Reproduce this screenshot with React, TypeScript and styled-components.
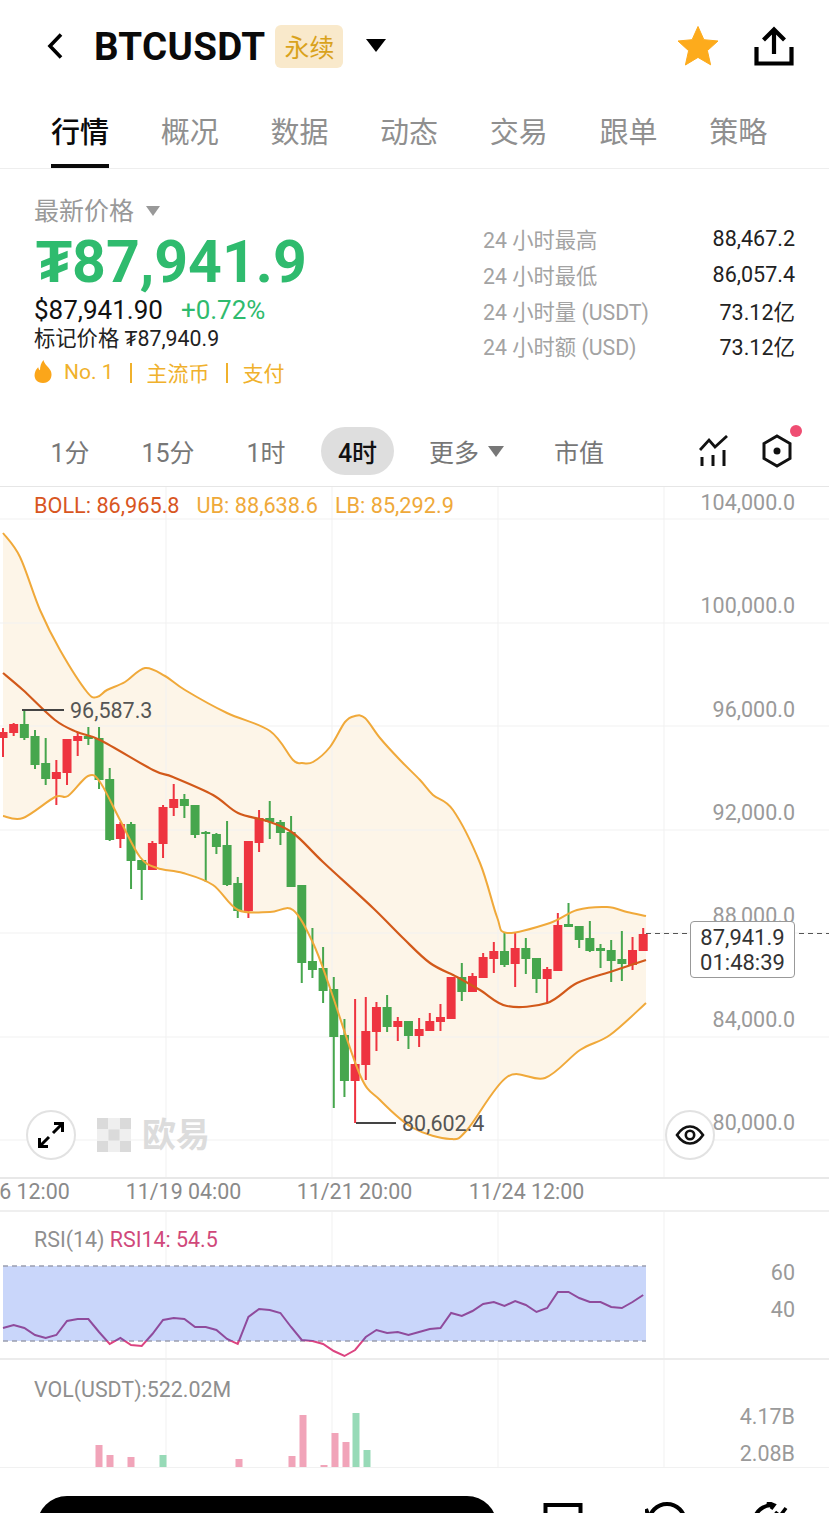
import styled, { createGlobalStyle } from "styled-components";

const FONT = `Roboto, "Noto Sans CJK SC", sans-serif`;
const STEP = 10.67;
const candleX = (i: number) => 3 + i * STEP;

// top of body, bottom of body, top of wick, bottom of wick, colour
type Candle = [number, number, number, number, "r" | "g"];
const CANDLES: Candle[] = [
  [732, 738, 728, 757, "r"], [724, 733, 723, 736, "r"], [724, 738, 711, 740, "g"], [736, 765, 730, 769, "g"],
  [763, 779, 738, 785, "g"], [772, 779, 760, 805, "r"], [739, 773, 739, 785, "r"], [736, 741, 732, 756, "r"],
  [736, 739, 727, 745, "g"], [738, 780, 727, 789, "g"], [779, 840, 768, 841, "g"], [824, 839, 822, 848, "r"],
  [824, 861, 822, 889, "g"], [860, 870, 860, 900, "g"], [843, 870, 841, 870, "r"], [807, 844, 805, 858, "r"],
  [799, 808, 784, 816, "r"], [799, 806, 794, 818, "g"], [805, 835, 805, 838, "g"], [832, 834, 831, 882, "g"],
  [834, 847, 833, 854, "g"], [845, 885, 821, 886, "g"], [883, 911, 877, 918, "g"], [841, 911, 841, 918, "r"],
  [818, 843, 810, 852, "r"], [818, 822, 801, 839, "g"], [822, 833, 820, 845, "g"], [832, 887, 816, 887, "g"],
  [885, 963, 885, 983, "g"], [961, 970, 928, 978, "g"], [968, 991, 947, 1003, "g"], [989, 1037, 977, 1108, "g"],
  [1035, 1081, 1019, 1097, "g"], [1064, 1081, 999, 1123, "r"], [1031, 1065, 997, 1080, "r"], [1007, 1032, 1002, 1051, "r"],
  [1007, 1027, 995, 1032, "g"], [1021, 1027, 1017, 1041, "r"], [1021, 1036, 1021, 1049, "g"], [1029, 1036, 1018, 1047, "r"],
  [1021, 1031, 1013, 1031, "r"], [1017, 1022, 1004, 1031, "r"], [977, 1019, 977, 1019, "r"], [977, 992, 963, 1001, "g"],
  [976, 992, 973, 992, "r"], [957, 978, 953, 978, "r"], [951, 959, 942, 973, "r"], [951, 965, 932, 967, "g"],
  [948, 964, 932, 987, "r"], [948, 959, 938, 974, "g"], [958, 979, 958, 993, "g"], [969, 979, 967, 1004, "r"],
  [925, 971, 913, 971, "r"], [924, 927, 903, 927, "g"], [926, 940, 926, 948, "g"], [938, 951, 921, 952, "g"],
  [948, 951, 944, 968, "g"], [950, 961, 940, 982, "g"], [959, 964, 931, 981, "g"], [950, 965, 937, 970, "r"],
  [934, 951, 928, 951, "r"],
];

const UPPER = [
  [3, 533], [20, 557], [40, 610], [60, 650], [87, 692], [97, 697], [107, 690], [125, 682], [145, 668], [165, 676],
  [185, 690], [227, 713], [270, 731], [293, 760], [302, 763], [313, 762], [330, 747], [345, 722], [355, 716], [365, 718],
  [380, 738], [400, 760], [420, 780], [433, 795], [453, 810], [480, 863], [497, 917], [507, 933], [550, 923], [577, 910],
  [607, 907], [627, 912], [646, 916],
];
const MIDDLE = [
  [3, 673], [23, 690], [55, 720], [77, 732], [100, 740], [153, 770], [173, 777], [213, 795], [238, 813], [267, 821],
  [293, 833], [323, 862], [373, 908], [403, 938], [430, 963], [457, 977], [480, 990], [507, 1006], [547, 1003],
  [577, 983], [613, 971], [646, 960],
];
const LOWER = [
  [3, 816], [23, 818], [55, 797], [68, 796], [88, 776], [100, 782], [120, 820], [140, 857], [157, 868], [183, 873],
  [213, 885], [238, 910], [270, 912], [293, 910], [313, 943], [330, 988], [360, 1075], [380, 1100], [413, 1128],
  [450, 1139], [467, 1130], [507, 1077], [545, 1078], [580, 1050], [610, 1035], [646, 1003],
];

const RSI = [
  1328, 1325, 1328, 1335, 1338, 1335, 1321, 1319, 1319, 1332, 1344, 1338, 1345, 1346, 1334, 1320, 1318, 1319, 1327, 1327,
  1330, 1339, 1344, 1317, 1309, 1310, 1313, 1327, 1340, 1341, 1344, 1351, 1356, 1350, 1337, 1330, 1333, 1332, 1335, 1332,
  1329, 1328, 1313, 1316, 1311, 1304, 1302, 1306, 1301, 1305, 1312, 1308, 1292, 1292, 1298, 1302, 1302, 1307, 1308, 1302,
  1295,
];

const VOLUME: [number, number, "r" | "g"][] = [
  [99, 1445, "r"], [110, 1455, "r"], [131, 1457, "r"], [163, 1455, "g"], [239, 1459, "r"], [292, 1456, "r"],
  [303, 1415, "r"], [324, 1465, "r"], [335, 1433, "r"], [346, 1442, "r"], [356, 1413, "g"], [367, 1450, "g"],
];

const TABS = ["行情", "概况", "数据", "动态", "交易", "跟单", "策略"];
const STATS = [
  ["24 小时最高", "88,467.2"],
  ["24 小时最低", "86,057.4"],
  ["24 小时量 (USDT)", "73.12亿"],
  ["24 小时额 (USD)", "73.12亿"],
];
const PRICE_AXIS = [
  ["104,000.0", 503], ["100,000.0", 606], ["96,000.0", 710], ["92,000.0", 813],
  ["88,000.0", 916], ["84,000.0", 1020], ["80,000.0", 1123],
] as const;
const TIME_AXIS = [["11/16 12:00", 12], ["11/19 04:00", 183.5], ["11/21 20:00", 354.5], ["11/24 12:00", 526.5]] as const;

const rsiPoints = RSI.map((y, i) => `${candleX(i)},${y}`).join(" ");

// catmull-rom through the sampled points, the bands are smooth curves
const smooth = (pts: number[][]) => {
  let d = `M${pts[0][0]} ${pts[0][1]}`;
  for (let i = 0; i < pts.length - 1; i++) {
    const p0 = pts[Math.max(i - 1, 0)];
    const p1 = pts[i];
    const p2 = pts[i + 1];
    const p3 = pts[Math.min(i + 2, pts.length - 1)];
    const c1x = p1[0] + (p2[0] - p0[0]) / 6;
    const c1y = p1[1] + (p2[1] - p0[1]) / 6;
    const c2x = p2[0] - (p3[0] - p1[0]) / 6;
    const c2y = p2[1] - (p3[1] - p1[1]) / 6;
    d += `C${c1x.toFixed(1)} ${c1y.toFixed(1)} ${c2x.toFixed(1)} ${c2y.toFixed(1)} ${p2[0]} ${p2[1]}`;
  }
  return d;
};

function VerticalGrid({ top, bottom }: { top: number; bottom: number }) {
  return (
    <>
      {[166, 332, 498, 664].map((x) => (
        <line key={x} x1={x} x2={x} y1={top} y2={bottom} stroke="#f1f1f1" strokeWidth="1" />
      ))}
    </>
  );
}

function MainChart() {
  const band = `${smooth(UPPER)}L${smooth([...LOWER].reverse()).slice(1)}Z`;
  return (
    <S.ChartSvg width="829" height="690" viewBox="0 487 829 690">
      <path d={band} fill="#fdf5e8" />
      {[519, 623, 726, 830, 933, 1037, 1140].map((y) => (
        <line key={y} x1="0" x2="829" y1={y} y2={y} stroke="#f1f1f1" strokeWidth="1" />
      ))}
      <VerticalGrid top={487} bottom={1177} />
      {CANDLES.map(([bodyTop, bodyBottom, wickTop, wickBottom, tone], i) => {
        const fill = tone === "r" ? "#ee3440" : "#46a64d";
        return (
          <g key={i} fill={fill}>
            <rect x={candleX(i) - 1} y={wickTop} width="2" height={wickBottom - wickTop} />
            <rect x={candleX(i) - 4.5} y={bodyTop} width="9" height={bodyBottom - bodyTop} />
          </g>
        );
      })}
      <path d={smooth(UPPER)} fill="none" stroke="#f0a93a" strokeWidth="2" />
      <path d={smooth(LOWER)} fill="none" stroke="#f0a93a" strokeWidth="2" />
      <path d={smooth(MIDDLE)} fill="none" stroke="#d2591a" strokeWidth="2.2" />
      <path d="M23 711V710H64M356 1123H396" fill="none" stroke="#444" strokeWidth="2" />
      <line x1="646" x2="829" y1="933.5" y2="933.5" stroke="#555" strokeWidth="1" strokeDasharray="5 4" />
      <S.MarkText x="70" y="718">96,587.3</S.MarkText>
      <S.MarkText x="402" y="1131">80,602.4</S.MarkText>
      {PRICE_AXIS.map(([label, y]) => (
        <S.AxisText key={label} x="795" y={y + 7} textAnchor="end">
          {label}
        </S.AxisText>
      ))}
    </S.ChartSvg>
  );
}

function RsiChart() {
  return (
    <S.ChartSvg width="829" height="146" viewBox="0 1212 829 146">
      <defs>
        <clipPath id="rsi-inside">
          <rect x="0" y="1212" width="829" height="129" />
        </clipPath>
        <clipPath id="rsi-outside">
          <rect x="0" y="1341" width="829" height="20" />
        </clipPath>
      </defs>
      <VerticalGrid top={1212} bottom={1358} />
      <rect x="3" y="1266" width="643" height="75" fill="#c9d6fa" />
      <path d="M3 1266H646M3 1341H646" stroke="#9a9fb0" strokeWidth="1.5" strokeDasharray="5 4" fill="none" />
      <polyline points={rsiPoints} fill="none" stroke="#8f4b9c" strokeWidth="2" clipPath="url(#rsi-inside)" />
      <polyline points={rsiPoints} fill="none" stroke="#dc4480" strokeWidth="2" clipPath="url(#rsi-outside)" />
      <S.AxisText x="795" y="1280" textAnchor="end">60</S.AxisText>
      <S.AxisText x="795" y="1317" textAnchor="end">40</S.AxisText>
    </S.ChartSvg>
  );
}

function VolumeChart() {
  return (
    <S.ChartSvg width="829" height="108" viewBox="0 1360 829 108">
      <VerticalGrid top={1360} bottom={1467} />
      <line x1="0" x2="829" y1="1467.5" y2="1467.5" stroke="#f1f1f1" />
      {VOLUME.map(([x, top, tone]) => (
        <rect key={x} x={x - 3.5} y={top} width="7" height={1467 - top} fill={tone === "r" ? "#f1a4b9" : "#97dab7"} />
      ))}
      <S.AxisText x="795" y="1424" textAnchor="end">4.17B</S.AxisText>
      <S.AxisText x="795" y="1461" textAnchor="end">2.08B</S.AxisText>
    </S.ChartSvg>
  );
}

export default function App() {
  return (
    <S.Page>
      <GlobalStyle />
      <S.Header>
        <svg width="20" height="30" viewBox="0 0 20 30">
          <path d="M16 3.5 5 15l11 11.5" fill="none" stroke="#000" strokeWidth="3.6" />
        </svg>
        <S.Symbol>BTCUSDT</S.Symbol>
        <S.Badge>永续</S.Badge>
        <S.HeaderCaret viewBox="0 0 20 14" width="20" height="14">
          <path d="M0 0h20L10 13z" fill="#000" />
        </S.HeaderCaret>
        <S.HeaderActions>
          <svg width="42" height="42" viewBox="0 0 42 42">
            <path
              d="M21 1.5l5.9 13.2 14.1 1.3-10.6 9.6 3.2 14.2L21 32.4 8.4 40l3.2-14.3L1 16l14.1-1.3z"
              fill="#fdab1c"
              stroke="#fdab1c"
              strokeLinejoin="round"
            />
          </svg>
          <svg width="40" height="42" viewBox="0 0 40 42">
            <path d="M20 29V5M9.5 15 20 4.5 30.5 15M2.5 22v16.5h35V22" fill="none" stroke="#000" strokeWidth="4.2" />
          </svg>
        </S.HeaderActions>
      </S.Header>

      <S.Tabs>
        {TABS.map((tab, i) => (
          <S.Tab key={tab} $active={i === 0}>
            {tab}
          </S.Tab>
        ))}
      </S.Tabs>

      <S.PriceSection>
        <S.PriceColumn>
          <S.LastLabel>
            最新价格
            <S.SmallCaret viewBox="0 0 14 10" width="14" height="10">
              <path d="M0 0h14L7 10z" fill="#999" />
            </S.SmallCaret>
          </S.LastLabel>
          <S.BigPrice>₮87,941.9</S.BigPrice>
          <S.SubPrice>
            $87,941.90<S.Change>+0.72%</S.Change>
          </S.SubPrice>
          <S.MarkPrice>标记价格 ₮87,940.9</S.MarkPrice>
          <S.Tags>
            <svg width="18" height="24" viewBox="0 0 18 24">
              <path
                d="M9.5 0c.6 4 5.2 6.8 7.3 11 1.9 4.1.3 12-7.8 12S-.6 16.4 1.3 11.5c.8-2 2-3.2 2.9-4.2.3 1.6.9 2.6 1.8 3C6 6.5 7 3 9.5 0z"
                fill="#fba61a"
              />
            </svg>
            <S.TagNo>No. 1</S.TagNo>
            <S.TagBar />
            <span>主流币</span>
            <S.TagBar />
            <span>支付</span>
          </S.Tags>
        </S.PriceColumn>
        <S.StatList>
          {STATS.map(([label, value]) => (
            <S.StatRow key={label}>
              <S.StatLabel>{label}</S.StatLabel>
              <S.StatValue>{value}</S.StatValue>
            </S.StatRow>
          ))}
        </S.StatList>
      </S.PriceSection>

      <S.Toolbar>
        <S.Range $width={90}>1分</S.Range>
        <S.Range $width={106}>15分</S.Range>
        <S.Range $width={90}>1时</S.Range>
        <S.ActiveRange $width={73}>4时</S.ActiveRange>
        <S.MoreRange>
          更多
          <svg width="16" height="11" viewBox="0 0 16 11">
            <path d="M0 0h16L8 11z" fill="#777" />
          </svg>
        </S.MoreRange>
        <S.Range $width={50}>市值</S.Range>
        <S.ToolIcons>
          <svg width="30" height="32" viewBox="0 0 30 32">
            <path d="M1 15 10 5l6 7L28 1" fill="none" stroke="#111" strokeWidth="2.8" />
            <path d="M3 22v9M14 20v11M25 15v16" fill="none" stroke="#111" strokeWidth="3" />
          </svg>
          <S.SettingsIcon>
            <svg width="30" height="34" viewBox="0 0 30 34">
              <path d="M15 2 28 9.5v15L15 32 2 24.5v-15z" fill="none" stroke="#111" strokeWidth="3" />
              <circle cx="15" cy="17" r="3.5" fill="#111" />
            </svg>
            <S.Dot />
          </S.SettingsIcon>
        </S.ToolIcons>
      </S.Toolbar>

      <S.MainPane>
        <MainChart />
        <S.Legend>
          <S.LegendItem $color="#d8561f">BOLL: 86,965.8</S.LegendItem>
          <S.LegendItem $color="#efa93a">UB: 88,638.6</S.LegendItem>
          <S.LegendItem $color="#efa93a">LB: 85,292.9</S.LegendItem>
        </S.Legend>
        <S.PriceTag>
          <span>87,941.9</span>
          <span>01:48:39</span>
        </S.PriceTag>
        <S.RoundButton $left={26}>
          <svg width="28" height="28" viewBox="0 0 28 28">
            <path d="M16 12 25 3M17 2.5h8.5V11M12 16l-9 9M2.5 17v8.5H11" fill="none" stroke="#000" strokeWidth="3" />
          </svg>
        </S.RoundButton>
        <S.RoundButton $left={665}>
          <svg width="30" height="22" viewBox="0 0 30 22">
            <path d="M2 11C6 5 10 2.5 15 2.5S24 5 28 11c-4 6-8 8.5-13 8.5S6 17 2 11z" fill="none" stroke="#111" strokeWidth="2.6" />
            <circle cx="15" cy="11" r="4.2" fill="none" stroke="#111" strokeWidth="2.6" />
          </svg>
        </S.RoundButton>
        <S.Watermark>
          <svg width="34" height="34" viewBox="0 0 34 34">
            <rect width="34" height="34" fill="#efefef" />
            <path d="M0 0h11v11H0zM23 0h11v11H23zM11.5 11.5h11v11h-11zM0 23h11v11H0zM23 23h11v11H23z" fill="#dadada" />
          </svg>
          欧易
        </S.Watermark>
      </S.MainPane>

      <S.TimeAxis>
        {TIME_AXIS.map(([label, center]) => (
          <S.TimeLabel key={label} $center={center}>
            {label}
          </S.TimeLabel>
        ))}
      </S.TimeAxis>

      <S.RsiPane>
        <RsiChart />
        <S.PaneTitle>
          RSI(14) <S.RsiValue>RSI14: 54.5</S.RsiValue>
        </S.PaneTitle>
      </S.RsiPane>

      <S.VolumePane>
        <VolumeChart />
        <S.VolumeTitle>VOL(USDT):522.02M</S.VolumeTitle>
      </S.VolumePane>

      <S.BottomBar>
        <S.BlackPill />
        <S.NavIcons>
          <svg width="40" height="30" viewBox="0 0 40 30">
            <path d="M2.5 30V3h35v27" fill="none" stroke="#000" strokeWidth="4" />
          </svg>
          <svg width="44" height="30" viewBox="0 0 44 30">
            <path d="M4 20A18 18 0 0 1 40 20" fill="none" stroke="#000" strokeWidth="4" />
            <path d="M1 7l4 11 9-5" fill="none" stroke="#000" strokeWidth="4" />
          </svg>
          <svg width="40" height="30" viewBox="0 0 40 30">
            <path d="M3 18C5 9 12 3 22 3" fill="none" stroke="#000" strokeWidth="4" />
            <path d="M16 0l7 3-3 4M24 10l5 4 6-8" fill="none" stroke="#000" strokeWidth="3.5" />
          </svg>
        </S.NavIcons>
      </S.BottomBar>
    </S.Page>
  );
}

const GlobalStyle = createGlobalStyle`
  html, body {
    margin: 0;
    padding: 0;
    background: #fff;
  }
  body {
    font-family: ${FONT};
  }
`;

const Range = styled.div<{ $width: number }>`
  width: ${(p) => p.$width}px;
  height: 48px;
  display: flex;
  align-items: center;
  justify-content: center;
`;

const PaneTitle = styled.div`
  position: absolute;
  top: 15px;
  left: 34px;
  font-size: 21.4px;
  line-height: 26px;
  color: #8f8f8f;
`;

const S = {
  Page: styled.div`
    width: 829px;
    height: 1513px;
    overflow: hidden;
    background: #fff;
    font-family: ${FONT};
  `,
  Header: styled.header`
    height: 95px;
    display: flex;
    align-items: center;
    padding: 0 35px 3px 45px;
    box-sizing: border-box;
  `,
  Symbol: styled.div`
    margin-left: 29px;
    font-size: 38.5px;
    font-weight: 700;
    letter-spacing: 0.3px;
    color: #0a0a0a;
  `,
  Badge: styled.div`
    margin-left: 10px;
    width: 68px;
    height: 43px;
    display: flex;
    align-items: center;
    justify-content: center;
    border-radius: 6px;
    background: #f9e9cb;
    color: #d9a21c;
    font-size: 25px;
  `,
  HeaderCaret: styled.svg`
    margin-left: 23px;
  `,
  HeaderActions: styled.div`
    margin-left: auto;
    display: flex;
    align-items: center;
    gap: 35px;
  `,
  Tabs: styled.nav`
    height: 73px;
    display: grid;
    grid-template-columns: repeat(7, 58px);
    column-gap: 51.7px;
    padding-left: 51px;
    border-bottom: 1px solid #eeeeee;
  `,
  Tab: styled.div<{ $active?: boolean }>`
    height: 73px;
    padding-top: 15px;
    box-sizing: border-box;
    font-size: 29px;
    line-height: 46px;
    white-space: nowrap;
    font-weight: ${(p) => (p.$active ? 500 : 400)};
    color: ${(p) => (p.$active ? "#0a0a0a" : "#8f8f8f")};
    border-bottom: ${(p) => (p.$active ? "4px solid #0a0a0a" : "none")};
  `,
  PriceSection: styled.section`
    height: 247px;
    display: flex;
    justify-content: space-between;
    padding: 23px 34px 0 34px;
    box-sizing: border-box;
  `,
  PriceColumn: styled.div`
    display: flex;
    flex-direction: column;
  `,
  LastLabel: styled.div`
    height: 34px;
    display: flex;
    align-items: center;
    font-size: 25px;
    color: #999;
  `,
  SmallCaret: styled.svg`
    margin-left: 12px;
    margin-top: 3px;
  `,
  BigPrice: styled.div`
    height: 68px;
    line-height: 72px;
    padding-left: 2px;
    font-size: 59px;
    font-weight: 700;
    color: #2fbb6e;
  `,
  SubPrice: styled.div`
    height: 33px;
    line-height: 33px;
    font-size: 26px;
    color: #111;
  `,
  Change: styled.span`
    margin-left: 18px;
    color: #2fbb6e;
  `,
  MarkPrice: styled.div`
    height: 23px;
    line-height: 23px;
    font-size: 21.3px;
    color: #222;
  `,
  Tags: styled.div`
    margin-top: 9px;
    height: 26px;
    display: flex;
    align-items: center;
    font-size: 21px;
    color: #f0b12c;
  `,
  TagNo: styled.span`
    margin-left: 12px;
  `,
  TagBar: styled.i`
    width: 2px;
    height: 20px;
    margin: 2px 15px 0 16px;
    background: #f0b12c;
  `,
  StatList: styled.div`
    width: 312px;
    margin-top: 29px;
    display: flex;
    flex-direction: column;
  `,
  StatRow: styled.div`
    height: 35.7px;
    display: flex;
    align-items: center;
    justify-content: space-between;
  `,
  StatLabel: styled.span`
    font-size: 21.3px;
    color: #a3a3a3;
  `,
  StatValue: styled.span`
    font-size: 21.5px;
    color: #222;
  `,
  Toolbar: styled.div`
    height: 71px;
    display: flex;
    align-items: center;
    padding-left: 25px;
    box-sizing: border-box;
    border-bottom: 1px solid #e6e6e6;
    font-size: 25px;
    color: #777;
  `,
  Range,
  ActiveRange: styled(Range)`
    margin-left: 10px;
    border-radius: 24px;
    background: #dedede;
    color: #111;
    font-weight: 500;
  `,
  MoreRange: styled.div`
    margin-left: 35px;
    width: 125px;
    display: flex;
    align-items: center;
    gap: 9px;
  `,
  ToolIcons: styled.div`
    margin-left: 95px;
    display: flex;
    align-items: center;
    gap: 33px;
  `,
  SettingsIcon: styled.div`
    position: relative;
    height: 34px;
  `,
  Dot: styled.i`
    position: absolute;
    top: -9px;
    right: -10px;
    width: 12px;
    height: 12px;
    border-radius: 50%;
    background: #ef4d72;
  `,
  ChartSvg: styled.svg`
    display: block;
  `,
  AxisText: styled.text`
    font-family: ${FONT};
    font-size: 21.5px;
    fill: #9a9a9a;
  `,
  MarkText: styled.text`
    font-family: ${FONT};
    font-size: 21.5px;
    fill: #555;
  `,
  MainPane: styled.div`
    position: relative;
    height: 690px;
    border-bottom: 2px solid #e8e8e8;
  `,
  Legend: styled.div`
    position: absolute;
    top: 6px;
    left: 34px;
    display: flex;
    gap: 17px;
    font-size: 21.7px;
    line-height: 26px;
  `,
  LegendItem: styled.span<{ $color: string }>`
    color: ${(p) => p.$color};
  `,
  PriceTag: styled.div`
    position: absolute;
    left: 690px;
    top: 434px;
    width: 105px;
    height: 57px;
    box-sizing: border-box;
    display: flex;
    flex-direction: column;
    align-items: center;
    justify-content: center;
    background: #fff;
    border: 1px solid #999;
    border-radius: 4px;
    font-size: 22px;
    line-height: 25px;
    color: #333;
  `,
  RoundButton: styled.div<{ $left: number }>`
    position: absolute;
    left: ${(p) => p.$left}px;
    top: 623px;
    width: 50px;
    height: 50px;
    box-sizing: border-box;
    display: flex;
    align-items: center;
    justify-content: center;
    border: 2px solid #e2e2e2;
    border-radius: 50%;
    background: #fff;
  `,
  Watermark: styled.div`
    position: absolute;
    left: 97px;
    top: 631px;
    display: flex;
    align-items: center;
    gap: 11px;
    font-size: 34px;
    line-height: 34px;
    font-weight: 700;
    color: #dcdcdc;
  `,
  TimeAxis: styled.div`
    position: relative;
    height: 31px;
    overflow: hidden;
    border-bottom: 2px solid #efefef;
  `,
  TimeLabel: styled.span<{ $center: number }>`
    position: absolute;
    left: ${(p) => p.$center}px;
    top: 0;
    transform: translateX(-50%);
    font-size: 21.4px;
    line-height: 26px;
    white-space: nowrap;
    color: #8a8a8a;
  `,
  RsiPane: styled.div`
    position: relative;
    height: 146px;
    border-bottom: 2px solid #ececec;
  `,
  PaneTitle,
  RsiValue: styled.span`
    color: #d0487a;
  `,
  VolumePane: styled.div`
    position: relative;
    height: 108px;
  `,
  VolumeTitle: styled(PaneTitle)`
    top: 17px;
  `,
  BottomBar: styled.div`
    height: 45px;
    display: flex;
    padding: 28px 0 0 37px;
    box-sizing: border-box;
    overflow: hidden;
  `,
  BlackPill: styled.div`
    width: 460px;
    height: 60px;
    border-radius: 30px;
    background: #000;
  `,
  NavIcons: styled.div`
    margin-left: 46px;
    margin-top: 6px;
    display: flex;
    gap: 62px;
    align-items: flex-start;
  `,
};
